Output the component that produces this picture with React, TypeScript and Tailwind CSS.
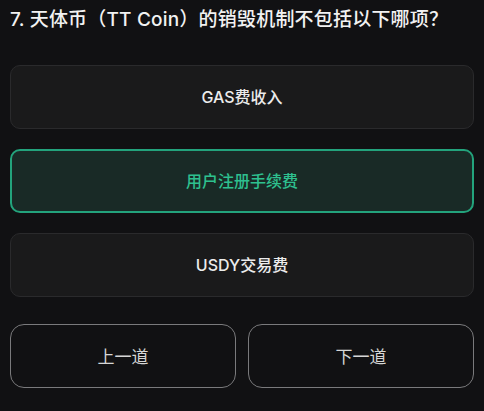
import React from 'react'

const options = ['GAS费收入', '用户注册手续费', 'USDY交易费']

export default function App() {
  const selected = 1

  return (
    <div
      className="w-[484px] h-[411px] bg-[#111113] px-[10px] pt-[7px] flex flex-col"
      style={{ fontFamily: 'Inter, "Noto Sans CJK SC", sans-serif' }}
    >
      <h1 className="text-[19px] leading-[26px] font-medium text-[#f2f2f2] tracking-[0.2px]">
        7. 天体币（TT Coin）的销毁机制不包括以下哪项？
      </h1>

      <div className="mt-[32px] flex flex-col gap-[20px]">
        {options.map((opt, i) => (
          <div
            key={i}
            className={
              i === selected
                ? 'h-[64px] rounded-[10px] border-2 border-[#23a37c] bg-[#192a26] flex items-center justify-center text-[16px] font-medium text-[#2ec08f]'
                : 'h-[64px] rounded-[10px] border border-[#2a2a2c] bg-[#1a1a1b] flex items-center justify-center text-[16px] font-medium text-[#ececec]'
            }
          >
            {opt}
          </div>
        ))}
      </div>

      {/* Navigation */}
      <div className="mt-[27px] grid grid-cols-2 gap-[12px]">
        <button className="h-[64px] rounded-[14px] border-[1.5px] border-[#7a7a7c] pt-[3px] text-[17px] text-[#d6d6d6]">
          上一道
        </button>
        <button className="h-[64px] rounded-[14px] border-[1.5px] border-[#7a7a7c] pt-[3px] text-[17px] text-[#d6d6d6]">
          下一道
        </button>
      </div>
    </div>
  )
}
